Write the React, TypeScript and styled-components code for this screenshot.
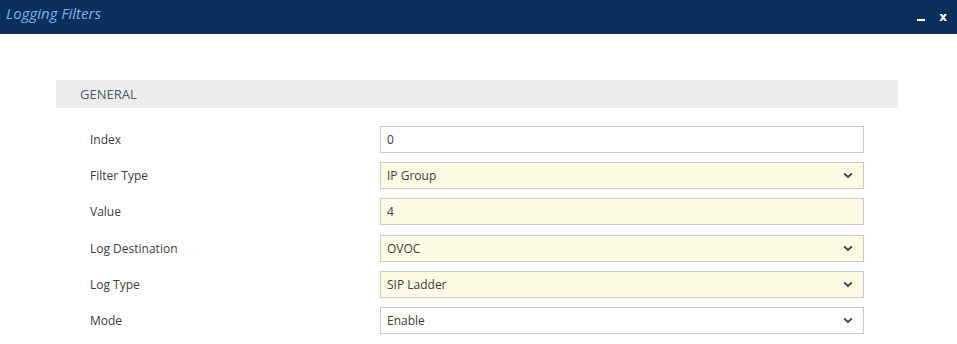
import React from "react";
import styled, { createGlobalStyle } from "styled-components";

const Global = createGlobalStyle`
  html, body { margin: 0; padding: 0; background: #ffffff; }
  body { font-family: "Open Sans", "Noto Sans", sans-serif; }
  * { box-sizing: border-box; }
`;

const Window = styled.div`
  width: 957px;
  height: 344px;
  background: #ffffff;
  overflow: hidden;
`;

const TitleBar = styled.div`
  height: 34px;
  background: #0b2f5b;
  display: flex;
  align-items: flex-start;
  justify-content: space-between;
  padding: 3px 10px 0 6px;
`;

const Title = styled.div`
  color: #7cb2ea;
  font-style: italic;
  font-size: 15px;
  line-height: 20px;
`;

const Controls = styled.div`
  display: flex;
  align-items: center;
  gap: 14px;
  padding-top: 7px;
  color: #ffffff;
  font-weight: 700;
  font-size: 12px;
  line-height: 14px;
`;

const Minimize = styled.span`
  display: block;
  width: 8px;
  height: 2px;
  background: #ffffff;
  margin-top: 6px;
`;

const Close = styled.span`
  display: block;
  font-family: "DejaVu Sans", sans-serif;
`;

const Content = styled.div`
  padding: 46px 59px 0 56px;
`;

const SectionHeader = styled.div`
  height: 28px;
  background: #ececec;
  color: #505a66;
  font-size: 13px;
  display: flex;
  align-items: center;
  padding-left: 24px;
`;

const Form = styled.div`
  display: grid;
  grid-template-columns: 290px 484px;
  row-gap: 9.2px;
  padding: 18px 0 0 34px;
`;

const Label = styled.div`
  font-size: 12px;
  color: #3c3c3c;
  display: flex;
  align-items: center;
  height: 27px;
`;

const Field = styled.div<{ $yellow?: boolean }>`
  height: 27px;
  border: 1px solid #c9cad4;
  background: ${(p) => (p.$yellow ? "#fefbe4" : "#ffffff")};
  display: flex;
  align-items: center;
  justify-content: space-between;
  padding: 0 10px 0 6px;
  font-size: 12px;
  color: #3c3c3c;
`;

const Chevron = () => (
  <svg width="10" height="7" viewBox="0 0 10 7">
    <polyline points="1.2,1.5 5,5 8.8,1.5" fill="none" stroke="#3a4450" strokeWidth="1.8" />
  </svg>
);

const rows = [
  { label: "Index", value: "0", yellow: false, select: false },
  { label: "Filter Type", value: "IP Group", yellow: true, select: true },
  { label: "Value", value: "4", yellow: true, select: false },
  { label: "Log Destination", value: "OVOC", yellow: true, select: true },
  { label: "Log Type", value: "SIP Ladder", yellow: true, select: true },
  { label: "Mode", value: "Enable", yellow: false, select: true },
];

export default function App() {
  return (
    <Window>
      <Global />
      <TitleBar>
        <Title>Logging Filters</Title>
        <Controls>
          <Minimize />
          <Close>x</Close>
        </Controls>
      </TitleBar>
      <Content>
        <SectionHeader>GENERAL</SectionHeader>
        <Form>
          {rows.map((r) => (
            <React.Fragment key={r.label}>
              <Label>{r.label}</Label>
              <Field $yellow={r.yellow}>
                <span>{r.value}</span>
                {r.select && <Chevron />}
              </Field>
            </React.Fragment>
          ))}
        </Form>
      </Content>
    </Window>
  );
}
